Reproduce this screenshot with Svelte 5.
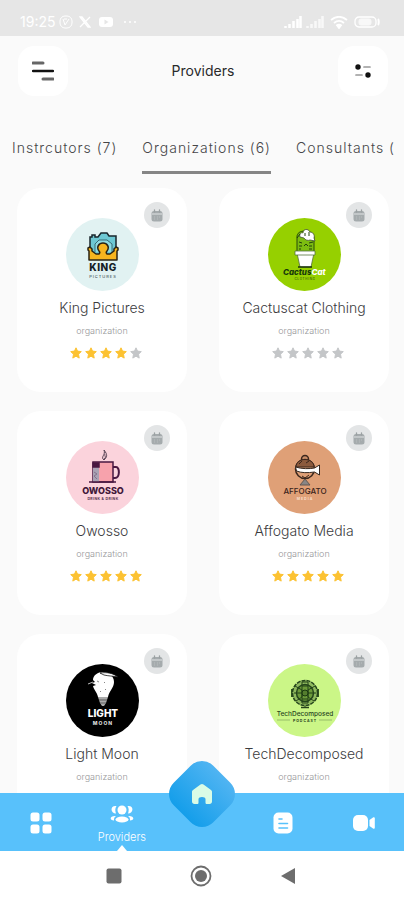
<script>
  const tabs = ['Instrcutors (7)', 'Organizations (6)', 'Consultants ('];
  let active = $state(1);

  const providers = [
    { name: 'King Pictures', logo: 'king', rating: 4 },
    { name: 'Cactuscat Clothing', logo: 'cactus', rating: 0 },
    { name: 'Owosso', logo: 'owosso', rating: 5 },
    { name: 'Affogato Media', logo: 'affogato', rating: 5 },
    { name: 'Light Moon', logo: 'moon', rating: 5 },
    { name: 'TechDecomposed', logo: 'tech', rating: 4 }
  ];
</script>

{#snippet logo(kind)}
  <svg class="avatar" viewBox="0 0 73 73" aria-hidden="true">
    {#if kind === 'king'}
      <circle cx="36.500" cy="36.500" r="36.500" fill="#e1f2f2" />
      <path d="M24 38V19h2v-2h3v2h3l3-4h6l2 3h7v20z" fill="#6dc8d3" stroke="#18262c" stroke-width="1.500" />
      <path d="M29 34V26l4-4h8l5 4v8" fill="#8edbe2" stroke="#28515a" stroke-width=".8" />
      <path d="M23 42V33l-1-1v-2l2-1 2 2v2l4 3h3c1-1 1-2 0-3-3-4 0-8 4-8s7 4 4 8c-1 1-1 2 0 3h3l4-3v-2l2-2 2 1v2l-1 1v9z" fill="#f7b51e" stroke="#2a2314" stroke-width="1.500" stroke-linejoin="round" />
      <text x="37" y="53" font-size="10" font-weight="800" text-anchor="middle" letter-spacing=".5" fill="#152025">KING</text>
      <text x="37" y="60" font-size="4" text-anchor="middle" letter-spacing="1" fill="#273539">PICTURES</text>
    {:else if kind === 'cactus'}
      <circle cx="36.500" cy="36.500" r="36.500" fill="#96d000" />
      <path d="M29 35V19c0-4 3-6 8-6s9 3 9 7v15z" fill="#7cbc10" stroke="#284b0b" />
      <path d="M32 19c-1-3 1-5 3-4 0-4 5-5 7-1 3 0 5 3 4 6l1 3-5-1c-2 1-5 0-6-2z" fill="#fff" stroke="#415230" stroke-width=".8" />
      <path d="M37 15v3m4-4v4M31 24l3 1m7 0 4-1m-9 4 2-2 2 2m-9 0h3m7 0h3M29 20l3-4M31 31h2m8 0h3" fill="none" stroke="#21420b" />
      <path d="m29 35 3 14h11l3-14z" fill="#fff" stroke="#54713a" stroke-width=".8" />
      <path d="M27 33h20v4H27z" fill="#fff" stroke="#54713a" stroke-width=".8" />
      <path d="M30 49h14" stroke="#18320b" stroke-width="1.500" />
      <text x="15" y="57" font-size="8" font-weight="800" font-style="italic" fill="#17380b">Cactus<tspan fill="#fff">Cat</tspan></text>
      <text x="37" y="62" font-size="3" text-anchor="middle" letter-spacing=".7" fill="#23440a">CLOTHING</text>
    {:else if kind === 'owosso'}
      <circle cx="36.500" cy="36.500" r="36.500" fill="#fbd3dc" />
      <path d="M38 19c-4-3 2-5 0-10 4 5 3 7 0 10zm0-1c3-2 0-3 1-5" fill="none" stroke="#564153" />
      <path d="M47 26h3c4 0 4 11-1 11h-2" fill="none" stroke="#4a1841" stroke-width="2" />
      <path d="M27 21h20v20H27z" fill="#f7a2ac" stroke="#4a1841" stroke-width="1.500" />
      <path d="M27 22h6v19h-6z" fill="#aaa2b4" />
      <path d="M27 22h6v4h-6zM23 41h27" fill="#4a1841" stroke="#4a1841" stroke-width="1.500" />
      <path d="m28 31 3 2-3 2 3 3" fill="none" stroke="#84738c" />
      <text x="37" y="53" font-size="9" font-weight="800" text-anchor="middle" fill="#421739">OWOSSO</text>
      <text x="37" y="59" font-size="3.500" font-weight="700" text-anchor="middle" letter-spacing=".4" fill="#5a304e">DRINK &amp; DRINK</text>
    {:else if kind === 'affogato'}
      <circle cx="36.500" cy="36.500" r="36.500" fill="#dfa077" />
      <circle cx="37" cy="18" r="3.500" fill="#c98d67" stroke="#3b271d" stroke-width="1.500" />
      <circle cx="37" cy="28" r="9.500" fill="#dfa077" stroke="#3b271d" stroke-width="1.500" />
      <path d="M28 26c0-10 18-10 18 0z" fill="#8b5a3d" stroke="#3b271d" />
      <path d="M27.500 26c6 2 14 2 19 1l5-3v10l-5-3c-7 1-13 1-18-1z" fill="#fff" stroke="#352820" />
      <path d="M31 23l3-3m4 2 3-2M34 35l3 2 4-3" fill="none" stroke="#3b271d" />
      <path d="m37 38-5 6h10z" fill="#888685" stroke="#635750" />
      <text x="37" y="53" font-size="8" font-weight="500" text-anchor="middle" fill="#3a241b">AFFOGATO</text>
      <text x="37" y="59" font-size="3.500" font-weight="700" text-anchor="middle" letter-spacing="1" fill="#f8ddca">MEDIA</text>
    {:else if kind === 'moon'}
      <circle cx="36.500" cy="36.500" r="36.500" fill="#000" />
      <path d="M27 16c0-5 5-8 10-8 6 0 11 4 11 10 0 6-5 9-6 15H32c-1-5-4-7-5-11l3-1-4-2 3-1z" fill="#fff" />
      <path d="M34 9c7-1 13 0 18 4-5-1-10-1-14-2z" fill="#fff" stroke="#111" stroke-width=".8" />
      <path d="m22 20 5-2" stroke="#bbb" />
      <path d="m31 17 2 1m6 0-1 1m-4 8 1 1m4-3 1 1" stroke="#888" />
      <path d="M32 33h10l-2 6-2 3h-2l-2-3z" fill="#aaa" />
      <path d="M33 36h8m-7 3h6" stroke="#5c5c5c" />
      <text x="37" y="53" font-size="10" font-weight="800" text-anchor="middle" fill="#fff">LIGHT</text>
      <text x="37" y="61" font-size="5" font-weight="800" text-anchor="middle" letter-spacing="1" fill="#ddd">MOON</text>
    {:else}
      <circle cx="36.500" cy="36.500" r="36.500" fill="#cbf687" />
      <path d="M23 25h28v8H23z" fill="#315320" />
      <circle cx="37" cy="29" r="12.500" fill="#8fb95e" stroke="#25451c" stroke-width="1.500" stroke-dasharray="4 1" />
      <circle cx="37" cy="29" r="8.500" fill="#6c9a3a" stroke="#25451c" stroke-width="1.500" />
      <path d="M34 18h6v21h-6zM27 22l7 4v7l-6 4m19-15-7 4v7l6 4M26 29h22M34 22h6m-6 13h6M37 42v2" fill="none" stroke="#234317" />
      <circle cx="37" cy="29" r="3" fill="#547d2e" stroke="#19380f" />
      <path d="M33 43.500h8" stroke="#27431b" stroke-width="1.500" />
      <text x="37" y="52" font-size="6.500" font-weight="500" text-anchor="middle" fill="#29451d">TechDecomposed</text>
      <text x="37" y="58" font-size="3.500" font-weight="700" text-anchor="middle" letter-spacing="1" fill="#29451d">PODCAST</text>
      <path d="M9 56h13m29 0h13" stroke="#83a75b" stroke-width=".7" />
    {/if}
  </svg>
{/snippet}

<div class="app">
  <div class="status">
    <span class="clock">19:25</span>
    <svg width="14" height="14" viewBox="0 0 14 14" fill="none" stroke="#fff"><rect x="1" y="1" width="12" height="12" rx="5" /><path d="M4 4l2 6 4-6M5 4h3" /></svg>
    <svg class="x" width="12" height="12" viewBox="0 0 12 12" fill="none" stroke="#fff"><path d="M1 1h2l8 10H9zM11 1 1 11" stroke-width="1.300" /></svg>
    <svg width="14" height="12" viewBox="0 0 14 12"><rect y="1" width="14" height="10" rx="3" fill="#fff" /><path d="m5.500 3.500 4 2.500-4 2.500z" fill="#e6e6e6" /></svg>
    <svg class="dots" width="14" height="4" viewBox="0 0 14 4" fill="#fff"><circle cx="2" cy="2" r="1" /><circle cx="7" cy="2" r="1" /><circle cx="12" cy="2" r="1" /></svg>
    <span class="fill"></span>
    {#each [0, 1] as n (n)}
      <svg width="18" height="12" viewBox="0 0 18 12" stroke="#fff" stroke-width="2.500" opacity={n ? 0.75 : 1}><path d="M1.500 12v-2m4 2V8m4 4V5m4 7V3m3-3v12" /></svg>
    {/each}
    <svg class="wifi" width="18" height="13" viewBox="0 0 18 13" fill="none" stroke="#fff" stroke-width="1.800"><path d="M1 4c5-4 11-4 16 0M4 7c3-2.500 7-2.500 10 0M6.500 9.500c2-1.300 3-1.300 5 0" /><path d="m7.500 10 1.500 2 1.500-2z" fill="#fff" /></svg>
    <svg width="26" height="12" viewBox="0 0 26 12" fill="none" stroke="#fff"><rect x="1" y="1" width="21" height="10" rx="4" stroke-width="1.300" /><rect x="5" y="3" width="12" height="6" rx="2" fill="#fff" opacity=".75" /><path d="M24 3c1 1 1 5 0 6" stroke-width="2" /></svg>
  </div>

  <header>
    <button class="square" aria-label="Menu">
      <svg width="22" height="20" viewBox="0 0 22 20" fill="none"><path d="M1 2h10M11 18h10" stroke="#666" stroke-width="3" stroke-linecap="round" /><path d="M1 10h20" stroke="#111" stroke-width="2.500" stroke-linecap="round" /></svg>
    </button>
    <h1>Providers</h1>
    <button class="square" aria-label="Filter">
      <svg width="16" height="14" viewBox="0 0 16 14"><circle cx="3" cy="3" r="2.700" fill="#111" /><circle cx="13" cy="11" r="2.700" fill="#111" /><path d="M9 3h6M1 11h6" stroke="#999" stroke-width="1.700" stroke-linecap="round" /></svg>
    </button>
  </header>

  <div class="tabs" role="tablist">
    {#each tabs as tab, i (tab)}
      <button role="tab" aria-selected={active === i} class:active={active === i} onclick={() => (active = i)}>{tab}</button>
    {/each}
  </div>

  <main>
    {#each providers as p (p.name)}
      <article>
        <button class="badge" aria-label="Book a meeting">
          <svg width="12" height="13" viewBox="0 0 12 13"><rect x=".5" y="2" width="11" height="10.500" rx="2.500" fill="#a5abad" /><path d="M3.500 3V.8M8.500 3V.8" stroke="#9ba1a3" stroke-width="1.300" stroke-linecap="round" /><path d="M1 5h10" stroke="#e0e3e4" /><path d="M3 8h1m2 0h1m1 0h1M3 10h1m2 0h1" stroke="#b9bebf" /></svg>
        </button>
        {@render logo(p.logo)}
        <h2>{p.name}</h2>
        <p>organization</p>
        <div class="stars" role="img" aria-label="{p.rating} out of 5">
          {#each [1, 2, 3, 4, 5] as n (n)}
            <svg width="12" height="12" viewBox="0 0 12 12"><path d="m6 .8 1.500 3.300 3.800.5-2.800 2.600.7 3.900L6 9.200l-3.200 1.900.7-3.900L.7 4.600l3.800-.5z" fill={n <= p.rating ? '#fcc232' : '#c4c6c8'} stroke={n <= p.rating ? '#fcc232' : '#c4c6c8'} stroke-width="1" stroke-linejoin="round" /></svg>
          {/each}
        </div>
      </article>
    {/each}
  </main>

  <nav class="bottom">
    <button aria-label="Categories">
      <svg width="22" height="22" viewBox="0 0 22 22" fill="#fff"><rect x=".5" y=".5" width="9" height="9" rx="2.500" /><rect x="12.500" y=".5" width="9" height="9" rx="2.500" /><rect x=".5" y="12.500" width="9" height="9" rx="2.500" /><rect x="12.500" y="12.500" width="9" height="9" rx="2.500" /></svg>
    </button>
    <button class="current">
      <svg width="24" height="18" viewBox="0 0 24 18" fill="#fff"><circle cx="12" cy="5" r="4.500" /><path d="M6.500 1C0 0 0 8 6 8.500 5 6 5 3 6.500 1zM17.500 1c6.500-1 6.500 7 .5 7.500C19 6 19 3 17.500 1z" /><ellipse cx="12" cy="14.500" rx="6.500" ry="3" /><path d="M5 11c-5 0-6 4-1 4.500 0-2 0-3 2-4.500zM19 11c5 0 6 4 1 4.500 0-2 0-3-2-4.500z" /></svg>
      <span>Providers</span>
      <i class="pointer"></i>
    </button>
    <div class="slot">
      <button class="home" aria-label="Home">
        <svg width="22" height="22" viewBox="0 0 22 22"><path d="M1 9c0-1 .4-1.500 1-2l7.500-5.600c1-.7 2-.7 3 0L20 7c.6.500 1 1 1 2v9.500c0 1.500-1 2.500-2.500 2.500H16c-1 0-1.500-.5-1.500-1.500V16c0-1.300-1.500-2-3.500-2s-3.500.7-3.500 2v3.500C7.500 20.500 7 21 6 21H3.500C2 21 1 20 1 18.500z" fill="#d9fce6" /></svg>
      </button>
    </div>
    <button aria-label="Articles">
      <svg width="20" height="22" viewBox="0 0 20 22"><rect x=".5" y=".5" width="19" height="21" rx="5" fill="#fff" /><path d="M6 7h3M6 11.500h8.500M6 16h8.500" stroke="#58c1fb" stroke-width="1.600" stroke-linecap="round" /></svg>
    </button>
    <button aria-label="Meetings">
      <svg width="22" height="18" viewBox="0 0 22 18" fill="#fff"><rect y="1" width="15" height="16" rx="5" /><path d="m16.500 6 3.500-2.500c1-.6 1.800 0 1.800 1v9c0 1-.8 1.600-1.800 1L16.500 12z" /></svg>
    </button>
  </nav>

  <div class="system">
    <button aria-label="Recent apps"><svg width="16" height="16" viewBox="0 0 16 16"><rect x=".5" y=".5" width="15" height="15" rx="2" fill="#6d6d6d" /></svg></button>
    <button aria-label="Home screen"><svg width="22" height="22" viewBox="0 0 22 22"><circle cx="11" cy="11" r="9.500" fill="none" stroke="#6d6d6d" stroke-width="1.800" /><circle cx="11" cy="11" r="6" fill="#6d6d6d" /></svg></button>
    <button aria-label="Back"><svg width="16" height="18" viewBox="0 0 16 18"><path d="M15 1v16L1 9z" fill="#6d6d6d" /></svg></button>
  </div>
</div>

<style>
  .app {
    height: 100vh;
    display: flex;
    flex-direction: column;
    overflow: hidden;
    background: #fafafa;
    color: #3c3c3e;
    font-family: Inter, "Liberation Sans", sans-serif;
  }
  button {
    border: 0;
    padding: 0;
    background: none;
    color: inherit;
    font: inherit;
    display: flex;
    align-items: center;
    justify-content: center;
    cursor: pointer;
  }
  svg { display: block; flex: none; }
  h1, h2, p { margin: 0; }

  .status {
    flex: none;
    height: 36px;
    box-sizing: border-box;
    padding: 8px 24px 0 20px;
    display: flex;
    align-items: center;
    gap: 4px;
    background: #e6e6e6;
    color: #fff;
  }
  .clock { font-size: 14px; line-height: 16px; }
  .x { margin: 0 4px 0 2px; }
  .dots { margin-left: 6px; }
  .fill { flex: 1; }
  .wifi { margin: 0 2px; }

  header {
    flex: none;
    display: flex;
    align-items: center;
    justify-content: space-between;
    padding: 10px 16px 0 18px;
  }
  .square {
    width: 50px;
    height: 50px;
    border-radius: 16px;
    background: #fff;
  }
  h1 { font-size: 14px; line-height: 20px; font-weight: 400; color: #29292b; }

  .tabs {
    flex: none;
    display: flex;
    gap: 25px;
    margin: 28px 8px 14px 12px;
    overflow: hidden;
  }
  .tabs button {
    flex: none;
    height: 50px;
    box-sizing: border-box;
    border-bottom: 3px solid transparent;
    font-size: 14px;
    font-weight: 300;
    letter-spacing: 1px;
    color: #464648;
  }
  .tabs .active { border-color: #858585; }

  main {
    flex: 1;
    min-height: 0;
    overflow: hidden;
    display: grid;
    grid-template-columns: 1fr 1fr;
    align-content: start;
    gap: 19px 32px;
    padding: 0 15px 0 17px;
  }
  article {
    position: relative;
    display: flex;
    flex-direction: column;
    align-items: center;
    padding: 30px 0 33px;
    border-radius: 24px;
    background: #fff;
  }
  .badge {
    position: absolute;
    top: 14px;
    right: 17px;
    width: 26px;
    height: 26px;
    border-radius: 50%;
    background: #e3e5e6;
  }
  .avatar { width: 73px; height: 73px; }
  .avatar text { font-family: Inter, "Liberation Sans", sans-serif; }
  h2 {
    margin-top: 7px;
    font-size: 14px;
    line-height: 20px;
    font-weight: 300;
    white-space: nowrap;
  }
  p {
    margin-top: 7px;
    font-size: 9px;
    line-height: 12px;
    font-weight: 300;
    color: #98989a;
  }
  .stars {
    display: flex;
    gap: 3px;
    margin-top: 10px;
    padding-left: 8px;
  }

  .bottom {
    flex: none;
    position: relative;
    height: 58px;
    display: grid;
    grid-template-columns: repeat(5, 1fr);
    padding-left: 1px;
    background: #58c1fb;
    color: #fff;
  }
  .bottom > button { padding-top: 2px; }
  .bottom .current {
    position: relative;
    flex-direction: column;
    gap: 6px;
    padding-top: 5px;
    font-size: 11px;
    font-weight: 300;
    line-height: 16px;
  }
  .pointer {
    position: absolute;
    bottom: 0;
    left: 50%;
    margin-left: -5px;
    border: 5px solid transparent;
    border-top: 0;
    border-bottom: 6px solid #fff;
  }
  .slot { position: relative; }
  .home {
    position: absolute;
    top: -27px;
    left: 50%;
    width: 56px;
    height: 56px;
    margin-left: -28px;
    border-radius: 16px;
    background: linear-gradient(0deg, #149eea, #50b4f2);
    transform: rotate(45deg);
  }
  .home svg { transform: rotate(-45deg); }

  .system {
    flex: none;
    height: 49px;
    display: flex;
    align-items: center;
    justify-content: center;
    gap: 51px;
    padding-right: 2px;
    background: #fff;
  }
  .system button { width: 36px; height: 48px; }
</style>
